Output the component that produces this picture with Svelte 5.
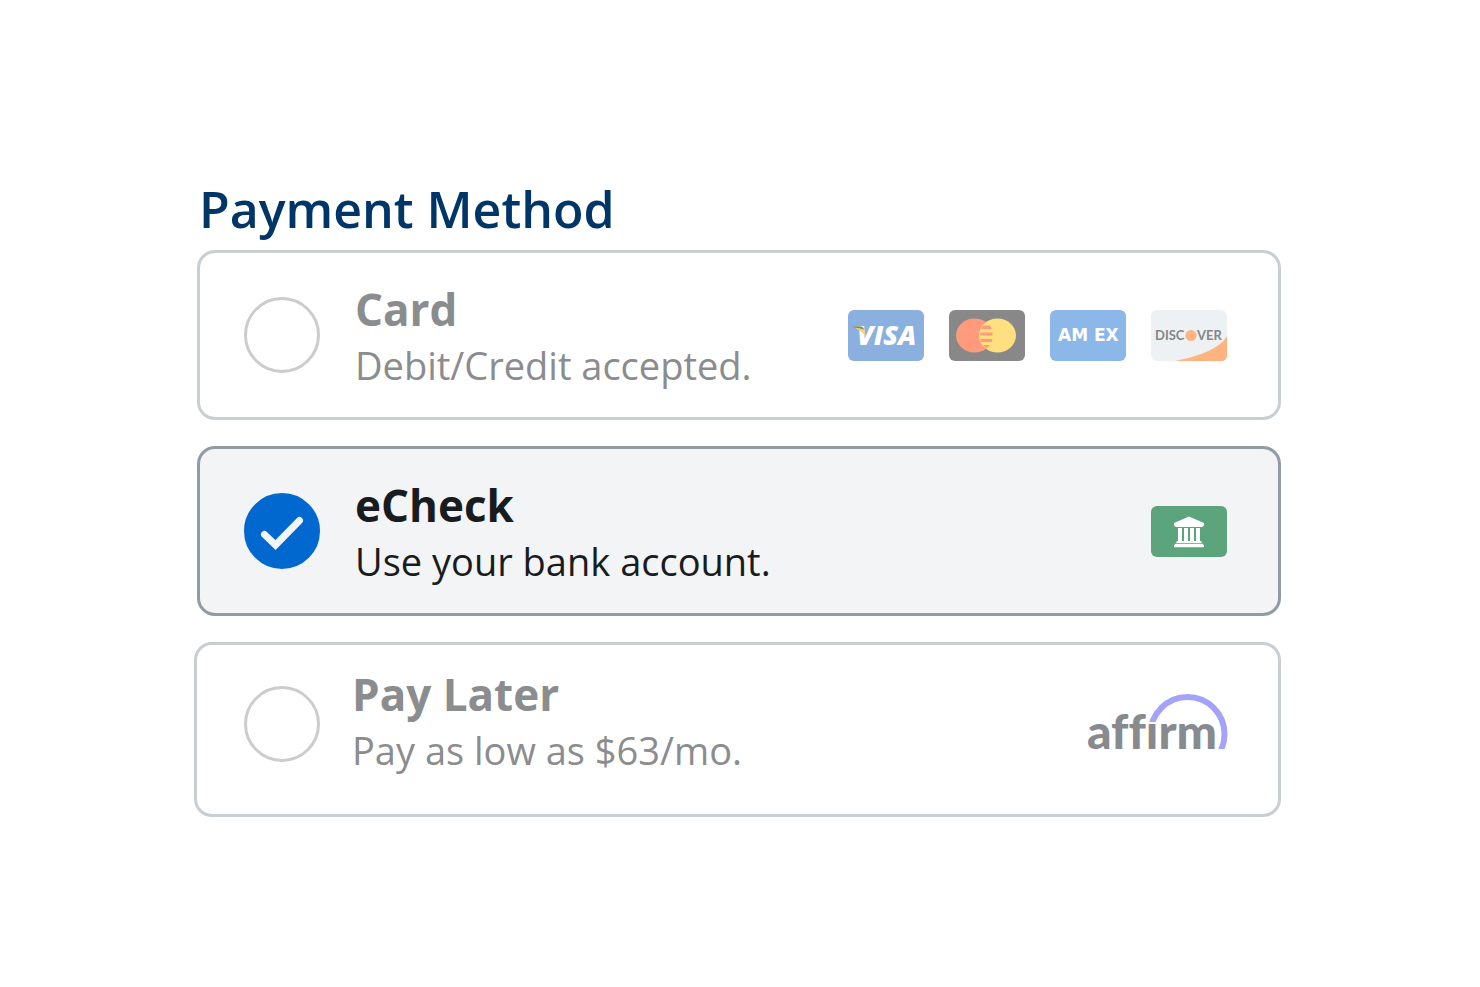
<script lang="ts">
	let selected = $state('echeck');

	const options = [
		{ id: 'card', title: 'Card', text: 'Debit/Credit accepted.' },
		{ id: 'echeck', title: 'eCheck', text: 'Use your bank account.' },
		{ id: 'later', title: 'Pay Later', text: 'Pay as low as $63/mo.' },
	];
</script>

<main>
	<fieldset>
		<legend>Payment Method</legend>

		<div class="options">
			{#each options as option}
				<label class="option {option.id}" class:active={selected === option.id}>
					<span class="radio">
						<input type="radio" name="method" value={option.id} bind:group={selected} />
						{#if selected === option.id}
							<svg class="check" viewBox="0 0 76 76" aria-hidden="true">
								<path d="M20.500 41.500 31.500 52 55.500 27.500" />
							</svg>
						{/if}
					</span>

					<span class="copy">
						<span class="title">{option.title}</span>
						<span class="text">{option.text}</span>
					</span>

					{#if option.id === 'card'}
						<span class="logos">
							<svg class="logo" viewBox="0 0 76 51" role="img" aria-label="Visa">
								<rect width="76" height="51" rx="6" fill="#89b0df" />
								<text class="visa" x="9" y="35">VISA</text>
								<path d="M6 16.500h7q3 .5 3.500 4l1.500 7q-3-6-12-10z" fill="#f3d27c" />
								<path d="M5.500 16.500H13q2.500 .5 3 3-4.500-1.500-10.500-2z" fill="#7d8a62" />
							</svg>
							<svg class="logo" viewBox="0 0 76 51" role="img" aria-label="Mastercard">
								<rect width="76" height="51" rx="6" fill="#888" />
								<ellipse cx="25.500" cy="25.500" rx="18.500" ry="17" fill="#ff9b7c" />
								<ellipse cx="48.500" cy="25.500" rx="18.500" ry="17" fill="#ffdf80" />
								<path
									d="M34 15.500h7l1.500 3.500H32.500zM31.500 22.500h12v3H31zM31 29h12.500l-1 3H32zM34 35h7l-3.500 3.500z"
									fill="#ff9b7c"
								/>
							</svg>
							<svg class="logo" viewBox="0 0 76 51" role="img" aria-label="American Express">
								<rect width="76" height="51" rx="6" fill="#8bb8e9" />
								<text class="amex" x="8" y="31">AM</text>
								<text class="amex" x="44" y="31">EX</text>
							</svg>
							<svg class="logo" viewBox="0 0 76 51" role="img" aria-label="Discover">
								<rect width="76" height="51" rx="6" fill="#edf1f4" />
								<path d="M24 51C44 47 68 40 76 26v19q0 6-6 6z" fill="#ffb47f" />
								<text class="discover" x="4" y="30">DISC</text>
								<circle cx="40" cy="25.500" r="5.500" fill="#ffb47f" />
								<text class="discover" x="46" y="30">VER</text>
							</svg>
						</span>
					{:else if option.id === 'echeck'}
						<svg class="logo" viewBox="0 0 76 51" aria-hidden="true">
							<rect width="76" height="51" rx="6" fill="#5ca47b" />
							<path
								d="M38 10.500 53 17v2.500l-2 1.500H25l-2-1.500V17zM27 22h4v13h-4zM33 22h4v13h-4zM39 22h4v13h-4zM45 22h4v13h-4zM26 35h24l1 2H25zM24.500 37.800h27l1.500 1.500v2H23v-2z"
								fill="#fff"
							/>
						</svg>
					{:else}
						<svg class="affirm" viewBox="0 0 140 60" role="img" aria-label="Affirm">
							<clipPath id="arc">
								<path d="M50 0h91v55H100V28H50z" />
							</clipPath>
							<circle cx="100.500" cy="40" r="37" clip-path="url(#arc)" />
							<text x="0" y="55">affırm</text>
						</svg>
					{/if}
				</label>
			{/each}
		</div>
	</fieldset>
</main>

<style>
	:global(body) {
		margin: 0;
		background: #fff;
	}

	main {
		padding: 174px 199px 64px 197px;
		font-family: 'Open Sans', sans-serif;
	}

	fieldset {
		border: 0;
		margin: 0;
		min-width: 0;
		padding: 0;
	}

	legend {
		color: #003667;
		font-size: 50px;
		font-weight: 600;
		line-height: 70px;
		padding: 0 2px 6px;
	}

	.options {
		display: flex;
		flex-direction: column;
		gap: 26px;
	}

	.option {
		align-items: center;
		background: #fff;
		border: 3px solid #c8ced2;
		border-radius: 18px;
		box-sizing: border-box;
		color: #8b8c8d;
		cursor: pointer;
		display: flex;
		gap: 35px;
		min-height: 170px;
		padding: 0 51px 0 44px;
	}

	.option.active {
		background: #f3f4f6;
		border-color: #8f9ca5;
		color: #191c1f;
	}

	.option.later {
		gap: 32px;
		margin-left: -3px;
		min-height: 175px;
		padding-bottom: 12px;
		padding-left: 47px;
	}

	.later .copy {
		padding-bottom: 8px;
	}

	.radio {
		display: grid;
		flex: none;
	}

	.radio > * {
		grid-area: 1 / 1;
	}

	input {
		appearance: none;
		border: 3px solid #cbcccd;
		border-radius: 50%;
		box-sizing: border-box;
		cursor: pointer;
		height: 76px;
		margin: 0;
		width: 76px;
	}

	input:checked {
		background: #0068cf;
		border-color: #0068cf;
	}

	.check {
		fill: none;
		height: 76px;
		pointer-events: none;
		stroke: #f3f4f6;
		stroke-linecap: round;
		stroke-width: 7;
		width: 76px;
	}

	.copy {
		display: flex;
		flex: 1;
		flex-direction: column;
	}

	.title {
		font-size: 44px;
		font-weight: 700;
		line-height: 60px;
	}

	.text {
		font-size: 38px;
		line-height: 52px;
	}

	.logos {
		display: flex;
		gap: 25px;
	}

	.logo {
		flex: none;
		height: 51px;
		width: 76px;
	}

	.visa {
		fill: #fff;
		font-size: 27px;
		font-style: italic;
		font-weight: 800;
	}

	.amex {
		fill: #fff;
		font-family: 'DejaVu Sans', sans-serif;
		font-size: 17px;
		font-weight: 700;
	}

	.discover {
		fill: #858687;
		font-family: Lato, sans-serif;
		font-size: 13px;
		font-weight: 700;
	}

	.affirm {
		fill: #878a8e;
		flex: none;
		font-family: Lato, sans-serif;
		font-size: 48px;
		font-variant-ligatures: none;
		font-weight: 900;
		height: 60px;
		overflow: visible;
		width: 140px;
	}

	.affirm circle {
		fill: none;
		stroke: #a4a3fc;
		stroke-width: 6;
	}
</style>
